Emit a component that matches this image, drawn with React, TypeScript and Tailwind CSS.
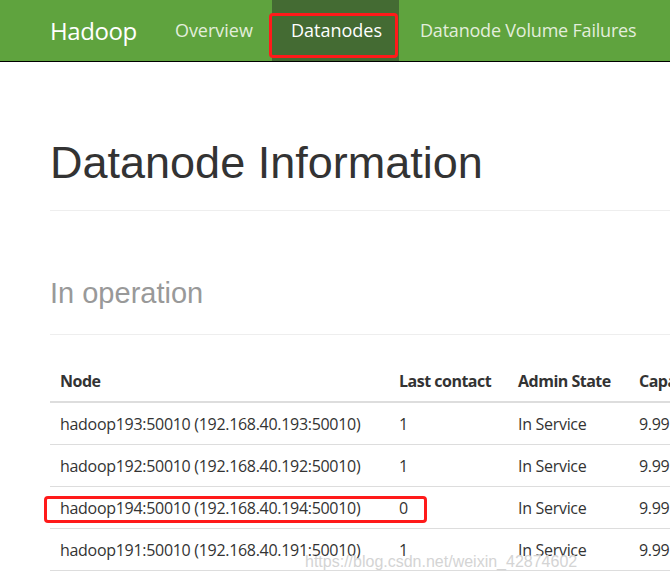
import React from "react";

const yahei = { fontFamily: '"Open Sans", "Noto Sans CJK SC", sans-serif' };

const rows = [
  ["hadoop193:50010 (192.168.40.193:50010)", "1", "In Service", "9.99"],
  ["hadoop192:50010 (192.168.40.192:50010)", "1", "In Service", "9.99"],
  ["hadoop194:50010 (192.168.40.194:50010)", "0", "In Service", "9.99"],
  ["hadoop191:50010 (192.168.40.191:50010)", "1", "In Service", "9.99"],
];

export default function App() {
  return (
    <div className="relative w-[670px] h-[579px] overflow-hidden bg-white text-[#333]">
      <nav
        className="h-[62px] bg-[#5fa33e] border-b border-black flex items-stretch pl-[50px]"
        style={yahei}
      >
        <div className="flex items-center text-[24px] text-white pr-[19px] tracking-[-0.4px]">Hadoop</div>
        <div className="flex items-center px-[19px] text-[18px] text-[#e3eedc]">Overview</div>
        <div className="relative flex items-center pl-[19px] pr-[17px] text-[18px] text-white bg-[#446b33]">
          Datanodes
          <div className="absolute left-[-3px] right-[1px] top-[13px] bottom-[3px] border-[3px] border-[#ff1a1a] rounded-[4px]" />
        </div>
        <div className="flex items-center px-[21px] text-[18px] text-[#e3eedc] whitespace-nowrap tracking-[-0.2px]">
          Datanode Volume Failures
        </div>
      </nav>

      <div className="pl-[50px]">
        <div className="border-b border-[#eee] pt-[76px] pb-[22px]">
          <h1
            className="text-[45px] leading-[50px] text-[#333] whitespace-nowrap"
            style={{ fontFamily: '"Liberation Sans", Arial, sans-serif' }}
          >
            Datanode Information
          </h1>
        </div>
        <div className="border-b border-[#eee] pt-[68px] pb-[26px]">
          <h3
            className="text-[29px] leading-[29px] text-[#999] whitespace-nowrap"
            style={{ fontFamily: '"Liberation Sans", Arial, sans-serif' }}
          >
            In operation
          </h3>
        </div>

        <div className="pt-[26px] w-[700px]" style={yahei}>
          <div className="grid grid-cols-[339px_119px_121px_1fr] h-[42px] items-center border-b-2 border-[#ddd] text-[16px] font-bold whitespace-nowrap tracking-[-0.5px]">
            <div className="pl-[10px]">Node</div>
            <div className="pl-[10px]">Last contact</div>
            <div className="pl-[10px]">Admin State</div>
            <div className="pl-[10px]">Capacity</div>
          </div>
          {rows.map((r, i) => (
            <div
              key={i}
              className="grid grid-cols-[339px_119px_121px_1fr] h-[42px] items-center border-b border-[#ddd] text-[16px] whitespace-nowrap tracking-[-0.3px]"
            >
              {r.map((c, j) => (
                <div key={j} className="pl-[10px]">
                  {c}
                </div>
              ))}
            </div>
          ))}
        </div>
      </div>

      <div className="absolute left-[44px] top-[496px] w-[383px] h-[27px] border-[3px] border-[#ff1a1a] rounded-[4px]" />

      <div
        className="absolute left-[305px] top-[552px] text-[16px] leading-[20px] text-[#d4d4d4] whitespace-nowrap"
        style={{ fontFamily: '"Liberation Sans", Arial, sans-serif' }}
      >
        https://blog.csdn.net/weixin_42874602
      </div>
    </div>
  );
}
